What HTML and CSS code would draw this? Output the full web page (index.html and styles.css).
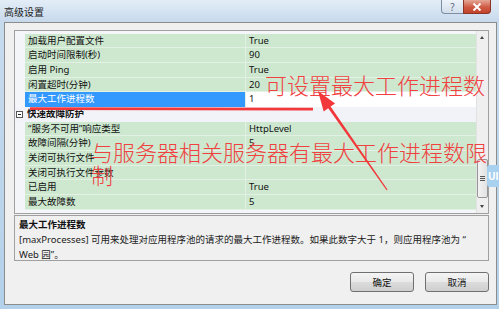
FILE: index.html
```html
<!DOCTYPE html>
<html lang="zh-CN">
  <head>
    <meta charset="UTF-8" />
    <title>高级设置</title>
    <link rel="stylesheet" href="styles.css">
  </head>
  <body>
    <div class="window">
      <div class="titlebar">
        <span class="title">高级设置</span>
        <div class="caption-btns">
          <span class="cap-btn help">?</span>
          <span class="cap-btn close">
            <svg width="10" height="8" viewBox="0 0 10 8"><path d="M1.5 0.5 L8.5 7.5 M8.5 0.5 L1.5 7.5" stroke="#fff" stroke-width="2"/></svg>
          </span>
        </div>
      </div>

      <div class="client">
        <div class="grid">
          <div class="rows">
            <div class="row"><span class="gut"></span><span class="name">加载用户配置文件</span><span class="val">True</span></div>
            <div class="row"><span class="gut"></span><span class="name">启动时间限制(秒)</span><span class="val">90</span></div>
            <div class="row"><span class="gut"></span><span class="name">启用 Ping</span><span class="val">True</span></div>
            <div class="row"><span class="gut"></span><span class="name">闲置超时(分钟)</span><span class="val">20</span></div>
            <div class="row selected"><span class="gut"></span><span class="name">最大工作进程数</span><span class="val">1</span></div>
            <div class="row category"><span class="gut"><span class="toggle"></span></span><span class="name">快速故障防护</span></div>
            <div class="row"><span class="gut"></span><span class="name">“服务不可用”响应类型</span><span class="val">HttpLevel</span></div>
            <div class="row"><span class="gut"></span><span class="name">故障间隔(分钟)</span><span class="val">5</span></div>
            <div class="row"><span class="gut"></span><span class="name">关闭可执行文件</span><span class="val"></span></div>
            <div class="row"><span class="gut"></span><span class="name">关闭可执行文件参数</span><span class="val"></span></div>
            <div class="row"><span class="gut"></span><span class="name">已启用</span><span class="val">True</span></div>
            <div class="row"><span class="gut"></span><span class="name">最大故障数</span><span class="val">5</span></div>
          </div>
          <div class="scrollbar">
            <div class="sb-arrow up"></div>
            <div class="sb-track">
              <div class="sb-thumb"><span></span><span></span><span></span></div>
            </div>
            <div class="sb-arrow down"></div>
          </div>
        </div>

        <div class="desc">
          <h5>最大工作进程数</h5>
          <p>
            <span class="line">[maxProcesses] 可用来处理对应用程序池的请求的最大工作进程数。如果此数字大于 1，则应用程序池为 “</span>
            <span class="line">Web 园”。</span>
          </p>
        </div>

        <div class="buttons">
          <button class="btn">确定</button>
          <button class="btn">取消</button>
        </div>
      </div>
    </div>

    <!-- red annotations drawn over the screenshot -->
    <div class="note note-top">可设置最大工作进程数</div>
    <div class="note note-mid">与服务器相关服务器有最大工作进程数限制</div>
    <svg class="marks" width="499" height="309" viewBox="0 0 499 309">
      <polygon points="30,107.3 313,107.8 313,110.6 30,110" fill="#f2383a"/>
      <polygon points="318,91 335.1,103.4 330.6,106.5 387.6,189.8 386.6,190.2 328.2,108.3 323.7,111.4" fill="#f2383a"/>
    </svg>
    <div class="side-tab">Ul</div>
  </body>
</html>
```

FILE: styles.css
```css
body {
  margin: 0;
  width: 499px;
  height: 309px;
  overflow: hidden;
  position: relative;
  background: linear-gradient(to bottom, #c9dcef, #b3d1ea);
  font-family: "Noto Sans", "Noto Sans CJK SC", sans-serif;
  font-size: 9.5px;
  color: #111;
}
.window {
  display: flex;
  flex-direction: column;
  height: 309px;
}
.titlebar {
  height: 22px;
  display: flex;
  align-items: center;
  padding-left: 4px;
  background: linear-gradient(to bottom, #e3edf7, #d2e1f0 60%, #c6d9ec);
}
.title {
  font-size: 10px;
  color: #1b1b1b;
  margin-top: 1px;
}
.caption-btns {
  margin-left: auto;
  margin-right: 8px;
  align-self: flex-start;
  display: flex;
}
.cap-btn {
  height: 14px;
  display: flex;
  align-items: center;
  justify-content: center;
  box-sizing: border-box;
}
.help {
  width: 22px;
  border: 1px solid #7d8ea3;
  border-top: none;
  border-right: none;
  border-radius: 0 0 0 4px;
  background: linear-gradient(to bottom, #eef3f9, #d2dfec);
  color: #5a6a7c;
  font-size: 10px;
}
.close {
  width: 28px;
  border: 1px solid #8a3527;
  border-top: none;
  border-radius: 0 0 4px 0;
  background: linear-gradient(to bottom, #e5a897, #cf5a43 55%, #c2432c);
}

.client {
  margin-left: 4px;
  width: 493px;
  height: 283px;
  box-sizing: border-box;
  border: 1px solid #8c8c8c;
  background-color: #f0f0f0;
  padding: 7px 7px 0 9px;
  display: flex;
  flex-direction: column;
}

.grid {
  height: 184px;
  box-sizing: border-box;
  border: 1px solid #a0a0a0;
  background-color: #f5f6f9;
  display: flex;
}
.rows {
  flex: 1;
  padding-top: 2.5px;
}
.row {
  height: 14.7px;
  display: flex;
  line-height: 14px;
}
.row .gut {
  width: 10px;
  flex-shrink: 0;
  background-color: #f4f5f8;
}
.row .name {
  width: 220px;
  flex-shrink: 0;
  box-sizing: border-box;
  padding-left: 3px;
  background-color: #cde8cf;
  border-bottom: 1px solid #e3f1e4;
  white-space: nowrap;
}
.row .val {
  flex: 1;
  padding-left: 3px;
  background-color: #cde8cf;
  border-bottom: 1px solid #e3f1e4;
  border-left: 1px solid #e3f1e4;
}
.row.selected .name {
  background-color: #3399ff;
  color: white;
  border-bottom-color: #3399ff;
}
.row.selected .val {
  background-color: #ffffff;
  border-bottom-color: #ffffff;
}
.row.category {
  background-color: #f2f3f8;
}
.row.category .name {
  background: none;
  border: none;
  font-weight: bold;
  padding-left: 2px;
}
.row.category .gut {
  background: none;
  display: flex;
  align-items: center;
}
.toggle {
  width: 7px;
  height: 7px;
  margin-left: 1px;
  border: 1px solid #555;
  box-sizing: border-box;
  position: relative;
  background-color: #fff;
}
.toggle::after {
  content: "";
  position: absolute;
  left: 1px;
  right: 1px;
  top: 2px;
  height: 1px;
  background-color: #222;
}

.scrollbar {
  width: 11px;
  display: flex;
  flex-direction: column;
  background-color: #efefef;
  border-left: 1px solid #e2e2e2;
}
.sb-arrow {
  height: 13px;
  position: relative;
}
.sb-arrow::after {
  content: "";
  position: absolute;
  left: 3px;
  border-left: 2.5px solid transparent;
  border-right: 2.5px solid transparent;
}
.sb-arrow.up::after {
  top: 5px;
  border-bottom: 3px solid #444;
}
.sb-arrow.down::after {
  top: 5px;
  border-top: 3px solid #444;
}
.sb-track {
  flex: 1;
  display: flex;
  flex-direction: column;
  justify-content: flex-end;
  padding-bottom: 2px;
}
.sb-thumb {
  height: 39px;
  box-sizing: border-box;
  border: 1px solid #979797;
  border-radius: 2px;
  background: linear-gradient(to right, #f3f3f3, #e2e2e2);
  display: flex;
  flex-direction: column;
  align-items: center;
  justify-content: center;
  gap: 1px;
}
.sb-thumb span {
  width: 5px;
  height: 1px;
  background-color: #555;
}

.desc {
  margin-top: 1px;
  height: 46px;
  box-sizing: border-box;
  border: 1px solid #a0a0a0;
  padding: 2px 4px 0 4px;
}
.desc h5 {
  margin: 0;
  font-size: 9.5px;
  line-height: 13px;
  font-weight: bold;
}
.desc p {
  margin: 2px 0 0 0;
  line-height: 14.5px;
  color: #222;
}
.desc .line {
  display: block;
  white-space: nowrap;
}

.buttons {
  margin-top: 11px;
  display: flex;
  justify-content: flex-end;
  gap: 11px;
}
.btn {
  width: 64px;
  height: 20px;
  padding: 0;
  border: 1px solid #707070;
  border-radius: 3px;
  background: linear-gradient(to bottom, #f4f4f4, #e9e9e9 50%, #dcdcdc 51%, #cfcfcf);
  font-family: "Noto Sans CJK SC", sans-serif;
  font-size: 9.5px;
  color: #111;
}

.note {
  position: absolute;
  font-family: "Noto Sans CJK SC", sans-serif;
  font-weight: 300;
  font-size: 22px;
  line-height: 23px;
  color: #f0403f;
}
.note-top {
  left: 265px;
  top: 73px;
  white-space: nowrap;
}
.note-mid {
  left: 91px;
  top: 140px;
  width: 400px;
}
.marks {
  position: absolute;
  left: 0;
  top: 0;
}
.side-tab {
  position: absolute;
  left: 487px;
  top: 165px;
  width: 14px;
  height: 22px;
  border-radius: 3px 0 0 3px;
  background-color: #a8d1ef;
  color: #fff;
  font-size: 10px;
  font-weight: bold;
  line-height: 22px;
  padding-left: 1px;
}
```
